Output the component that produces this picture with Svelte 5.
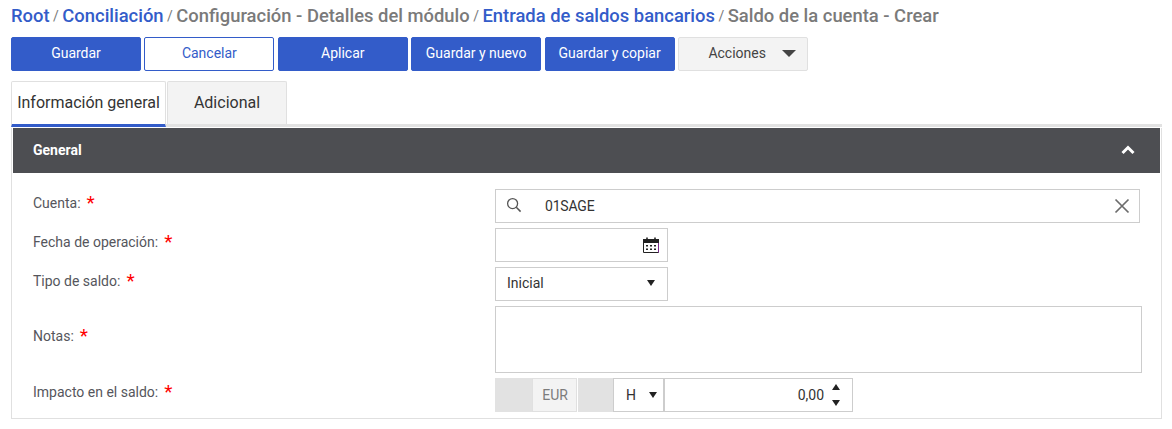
<script>
	const crumbs = [
		{ text: 'Root', link: true },
		{ text: 'Conciliación', link: true },
		{ text: 'Configuración - Detalles del módulo', link: false },
		{ text: 'Entrada de saldos bancarios', link: true },
		{ text: 'Saldo de la cuenta - Crear', link: false }
	];
	const actions = [
		{ label: 'Guardar', kind: 'primary' },
		{ label: 'Cancelar', kind: 'outline' },
		{ label: 'Aplicar', kind: 'primary' },
		{ label: 'Guardar y nuevo', kind: 'primary' },
		{ label: 'Guardar y copiar', kind: 'primary' }
	];
</script>

<div class="page">
	<div class="breadcrumb">
		{#each crumbs as crumb, i}
			{#if i > 0}<span class="sep">/</span>{/if}
			<span class:link={crumb.link} class="crumb">{crumb.text}</span>
		{/each}
	</div>

	<div class="toolbar">
		{#each actions as action}
			<button class="btn {action.kind}">{action.label}</button>
		{/each}
		<button class="btn menu">
			<span>Acciones</span>
			<i class="menu-caret"></i>
		</button>
	</div>

	<div class="tabs">
		<div class="tab active">Información general</div>
		<div class="tab">Adicional</div>
	</div>

	<section class="panel">
		<header class="panel-head">
			<span>General</span>
			<svg width="14" height="10" viewBox="0 0 14 10"><path d="M1.5 8 L7 2.5 L12.5 8" fill="none" stroke="#fff" stroke-width="3" /></svg>
		</header>

		<div class="form">
			<div class="label"><span>Cuenta:</span><em>*</em></div>
			<div class="field lookup">
				<span class="lookup-icon">
					<svg width="16" height="16" viewBox="0 0 16 16"><circle cx="6.6" cy="6.6" r="5" fill="none" stroke="#555" stroke-width="1.3" /><path d="M10.3 10.3 L14.6 14.6" stroke="#555" stroke-width="1.5" /></svg>
				</span>
				<span class="lookup-value">01SAGE</span>
				<span class="lookup-clear">
					<svg width="16" height="16" viewBox="0 0 16 16"><path d="M1.5 1.5 L14.5 14.5 M14.5 1.5 L1.5 14.5" stroke="#6c6c6c" stroke-width="1.7" /></svg>
				</span>
			</div>

			<div class="label"><span>Fecha de operación:</span><em>*</em></div>
			<div class="field short date">
				<svg width="16" height="16" viewBox="0 0 16 16">
					<path d="M0.5 2.5 H15.5 V15.5 H0.5 Z" fill="#fff" stroke="#222" />
					<path d="M0 2 H16 V6 H0 Z" fill="#222" />
					<path d="M4 0.5 V3 M12 0.5 V3" stroke="#222" stroke-width="1.6" />
					<path d="M15.5 6 V15.5" stroke="#7a2a8c" />
					<path d="M3 8 H5 V9.6 H3 Z M7 8 H9 V9.6 H7 Z M11 8 H13 V9.6 H11 Z M3 11.4 H5 V13 H3 Z M7 11.4 H9 V13 H7 Z M11 11.4 H13 V13 H11 Z" fill="#222" />
				</svg>
			</div>

			<div class="label"><span>Tipo de saldo:</span><em>*</em></div>
			<div class="field short select">
				<span>Inicial</span>
				<i class="caret"></i>
			</div>

			<div class="label notes"><span>Notas:</span><em>*</em></div>
			<div class="field notes-box"></div>

			<div class="label"><span>Impacto en el saldo:</span><em>*</em></div>
			<div class="amount">
				<span class="filler first"></span>
				<span class="currency">EUR</span>
				<span class="filler second"></span>
				<span class="sign"><b>H</b><i class="caret"></i></span>
				<span class="number">
					<span>0,00</span>
					<span class="spinner"><i class="caret up"></i><i class="caret"></i></span>
				</span>
			</div>
		</div>
	</section>
</div>

<style>
	:global(body) {
		margin: 0;
		background: #fff;
	}

	.page {
		width: 1172px;
		height: 429px;
		box-sizing: border-box;
		padding: 5px 10px 0 11px;
		font-family: Roboto, "Liberation Sans", sans-serif;
		overflow: hidden;
	}

	.breadcrumb {
		height: 21px;
		display: flex;
		align-items: center;
		gap: 3.5px;
		font-size: 18.4px;
		font-weight: 500;
		color: #7a7a7a;
		white-space: nowrap;
	}

	.crumb.link {
		color: #335cc9;
	}

	.sep {
		font-weight: 400;
		font-size: 14px;
	}

	.toolbar {
		display: flex;
		gap: 3.4px;
		margin-top: 11px;
	}

	.btn {
		width: 130px;
		height: 34px;
		padding: 0 0 2px;
		box-sizing: border-box;
		border-radius: 2px;
		font: 400 14px Roboto, sans-serif;
	}

	.primary {
		background: #335cc9;
		border: 1px solid #335cc9;
		color: #fff;
	}

	.outline {
		background: #fff;
		border: 1px solid #335cc9;
		color: #335cc9;
	}

	.menu {
		background: #f3f3f3;
		border: 1px solid #e0e0e0;
		color: #444;
		display: flex;
		align-items: center;
		justify-content: flex-end;
		gap: 16px;
		padding-right: 11px;
	}

	.menu-caret {
		width: 0;
		height: 0;
		border-left: 7px solid transparent;
		border-right: 7px solid transparent;
		border-top: 7px solid #444;
	}

	.tabs {
		display: flex;
		gap: 1px;
		margin-top: 10px;
		height: 46px;
		box-sizing: border-box;
		border-bottom: 3px solid #e2e2e2;
	}

	.tab {
		height: 43px;
		box-sizing: border-box;
		width: 120px;
		border: 1px solid #e0e0e0;
		border-bottom: 0;
		border-radius: 2px 2px 0 0;
		background: #f3f3f3;
		color: #333;
		font-size: 16px;
		padding-bottom: 2px;
		display: flex;
		align-items: center;
		justify-content: center;
	}

	.tab.active {
		width: 155px;
		height: 46px;
		background: #fff;
		border-bottom: 3px solid #335cc9;
		position: relative;
	}

	.panel {
		margin-top: 1px;
		height: 291px;
		box-sizing: border-box;
		border: 1px solid #e0e0e0;
		border-top: 0;
		padding: 0 1px;
	}

	.panel-head {
		height: 45px;
		box-sizing: border-box;
		background: #4d4e52;
		color: #fff;
		font-size: 14px;
		font-weight: 700;
		display: flex;
		align-items: center;
		justify-content: space-between;
		padding: 0 25px 2px 20px;
	}

	.form {
		display: grid;
		grid-template-columns: 462px 645px;
		grid-template-rows: 34px 34px 34px 67px 34px;
		row-gap: 5px;
		padding: 16px 0 0 20px;
	}

	.label {
		display: flex;
		align-items: center;
		padding-bottom: 8px;
		font-size: 14px;
		color: #55565c;
	}

	.label span {
		margin-top: 1px;
	}

	.label em {
		font-style: normal;
		color: #f00;
		font-size: 19px;
		line-height: 1;
		margin-left: 6px;
	}

	.field {
		box-sizing: border-box;
		border: 1px solid #cdcdcd;
		background: #fff;
		font-size: 14px;
		color: #333;
		display: flex;
		align-items: center;
	}

	.lookup-icon {
		width: 35px;
		display: flex;
		justify-content: center;
		margin-top: -2px;
	}

	.lookup-value {
		flex: 1;
		padding-left: 14px;
		letter-spacing: -0.2px;
	}

	.lookup-clear {
		display: flex;
		margin-right: 9px;
	}

	.short {
		width: 173px;
	}

	.date {
		justify-content: flex-end;
		padding-right: 8px;
	}

	.select {
		justify-content: space-between;
		padding: 0 12px 2px 11px;
	}

	.caret {
		width: 0;
		height: 0;
		border-left: 4px solid transparent;
		border-right: 4px solid transparent;
		border-top: 6px solid #222;
	}

	.caret.up {
		border-top: 0;
		border-bottom: 6px solid #222;
	}

	.notes-box {
		width: 647px;
	}

	.amount {
		display: flex;
		height: 34px;
		font-size: 14px;
	}

	.filler {
		background: #e2e2e2;
	}

	.filler.first {
		width: 37px;
	}

	.filler.second {
		width: 35px;
	}

	.currency {
		box-sizing: border-box;
		width: 45px;
		margin-right: 1px;
		background: #f3f3f3;
		border: 1px solid #e0e0e0;
		color: #7c7c7c;
		display: flex;
		align-items: center;
		justify-content: flex-end;
		padding: 0 8px 0 0;
	}

	.sign,
	.number {
		box-sizing: border-box;
		border: 1px solid #cdcdcd;
		display: flex;
		align-items: center;
		color: #333;
	}

	.sign {
		width: 51px;
		justify-content: space-between;
		padding: 0 6px 0 12px;
	}

	.sign b {
		font-weight: 400;
	}

	.number {
		width: 189px;
		justify-content: flex-end;
		padding-right: 12px;
		gap: 8px;
	}

	.spinner {
		display: flex;
		flex-direction: column;
		gap: 10px;
	}
</style>
